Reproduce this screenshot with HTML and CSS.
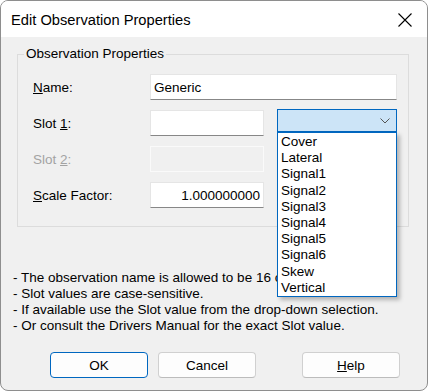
FILE: index.html
```html
<!DOCTYPE html>
<html lang="en">
<head>
    <meta charset="UTF-8">
    <title>Edit Observation Properties</title>
    <link rel="stylesheet" href="styles.css">
</head>
<body>

<div class="window">
    <div class="titlebar">
        <span class="title">Edit Observation Properties</span>
        <svg class="close" width="14" height="14" viewBox="0 0 14 14">
            <path d="M0.5 0.5 L13.5 13.5 M13.5 0.5 L0.5 13.5" stroke="#000" stroke-width="1.1" fill="none"/>
        </svg>
    </div>

    <fieldset class="group">
        <legend>Observation Properties</legend>
        <div class="fields">
            <label for="name"><u>N</u>ame:</label>
            <input type="text" id="name" class="wide" value="Generic">

            <label for="slot1">Slot <u>1</u>:</label>
            <div class="slotRow">
                <input type="text" id="slot1" class="short">
                <div class="combo">
                    <svg class="chevron" width="10" height="6" viewBox="0 0 10 6">
                        <path d="M0.5 0.5 L5 5 L9.5 0.5" stroke="#555" stroke-width="1" fill="none"/>
                    </svg>
                    <!-- open drop-down list -->
                    <ul class="dropList">
                        <li>Cover</li>
                        <li>Lateral</li>
                        <li>Signal1</li>
                        <li>Signal2</li>
                        <li>Signal3</li>
                        <li>Signal4</li>
                        <li>Signal5</li>
                        <li>Signal6</li>
                        <li>Skew</li>
                        <li>Vertical</li>
                    </ul>
                </div>
            </div>

            <label for="slot2" class="disabled">Slot <u>2</u>:</label>
            <input type="text" id="slot2" class="short" disabled>

            <label for="scale"><u>S</u>cale Factor:</label>
            <input type="text" id="scale" class="short number" value="1.000000000">
        </div>
    </fieldset>

    <div class="notes">
        <p>- The observation name is allowed to be 16 characters long.</p>
        <p>- Slot values are case-sensitive.</p>
        <p>- If available use the Slot value from the drop-down selection.</p>
        <p>- Or consult the Drivers Manual for the exact Slot value.</p>
    </div>

    <div class="buttons">
        <button class="default">OK</button>
        <button>Cancel</button>
        <button class="help"><u>H</u>elp</button>
    </div>
</div>

</body>
</html>
```

FILE: styles.css
```css
body {
    margin: 0;
    font-family: "Liberation Sans", Arial, sans-serif;
    font-size: 13.5px;
    color: #000;
}

.window {
    width: 428px;
    height: 391px;
    box-sizing: border-box;
    border: 1px solid #8e8e8e;
    border-radius: 8px;
    background-color: #f0f0f0;
    overflow: hidden;
}

.titlebar {
    height: 36px;
    background-color: #fff;
    display: flex;
    align-items: center;
    justify-content: space-between;
    padding: 0 15px 0 10px;
}

.title {
    font-size: 14.7px;
    padding-top: 2px;
}

.close {
    display: block;
    margin-top: 2px;
}

.group {
    margin: 9px 18px 0 16px;
    padding: 12px 11px 18px 15px;
    border: 1px solid #dcdcdc;
    min-width: 0;
}

.group legend {
    margin-left: -9px;
    padding: 0 2px;
    line-height: 16px;
}

.fields {
    display: grid;
    grid-template-columns: 117px 1fr;
    grid-auto-rows: 26px;
    row-gap: 10px;
    align-items: center;
}

.fields label {
    padding-top: 1px;
}

label.disabled {
    color: #a3a3a3;
}

input {
    font-family: inherit;
    font-size: 13.5px;
    height: 26px;
    box-sizing: border-box;
    margin: 0;
    padding: 0 3px;
    border: 1px solid #e5e5e5;
    border-bottom-color: #878787;
    background-color: #fff;
    outline: none;
}

.wide {
    width: 100%;
}

.short {
    width: 114px;
}

input:disabled {
    background-color: #f0f0f0;
    border-color: #fafafa;
}

.number {
    text-align: right;
}

.slotRow {
    display: flex;
    align-items: flex-start;
    gap: 13px;
    height: 26px;
}

.combo {
    position: relative;
    width: 120px;
    height: 23px;
    margin-top: -1px;
    box-sizing: border-box;
    border: 1px solid #0067c0;
    background-color: #cce4f7;
    display: flex;
    align-items: center;
    justify-content: flex-end;
    padding-right: 6px;
}

.chevron {
    display: block;
}

.dropList {
    position: absolute;
    top: 22px;
    left: -1px;
    width: 120px;
    box-sizing: border-box;
    margin: 0;
    padding: 1px 0 0 3px;
    list-style: none;
    background-color: #fff;
    border: 1px solid #0067c0;
    box-shadow: 3px 3px 4px rgba(0, 0, 0, 0.25);
    z-index: 2;
}

.dropList li {
    height: 16.2px;
    line-height: 16px;
}

.notes {
    margin: 43px 0 0 12px;
}

.notes p {
    margin: 0;
    line-height: 16px;
    white-space: nowrap;
}

.buttons {
    display: flex;
    gap: 10px;
    margin-top: 18px;
    padding: 0 27px 0 49px;
}

button {
    width: 98px;
    height: 26px;
    font-family: inherit;
    font-size: 13.5px;
    color: #000;
    background-color: #fdfdfd;
    border: 1px solid #d0d0d0;
    border-bottom-color: #bcbcbc;
    border-radius: 4px;
    padding: 0;
}

button.default {
    border-color: #0067c0;
}

.help {
    margin-left: auto;
}
```
